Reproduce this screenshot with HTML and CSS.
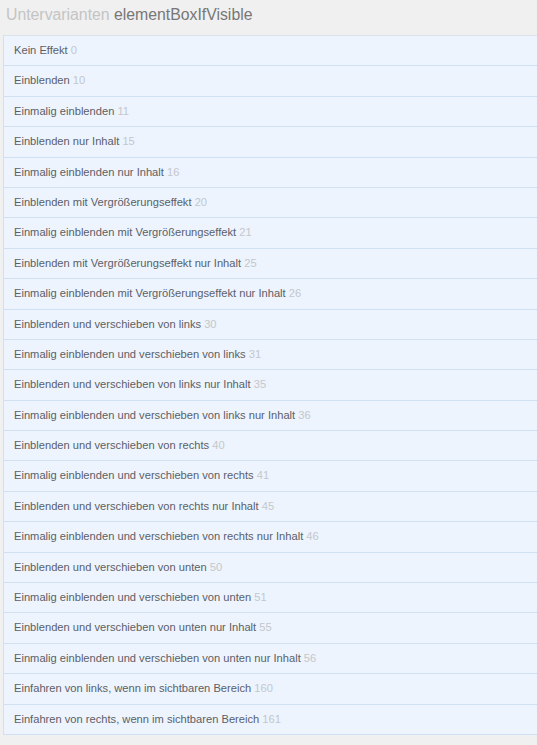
FILE: index.html
```html
<!DOCTYPE html>
<html>
<head>
  <title>Untervarianten</title>
  <link rel="stylesheet" href="styles.css">
</head>
<body>
  <div class="panel">
    <h2 class="panel-title"><span class="muted">Untervarianten</span> elementBoxIfVisible</h2>
    <ul class="variants">
      <li>Kein Effekt <span class="num">0</span></li>
      <li>Einblenden <span class="num">10</span></li>
      <li>Einmalig einblenden <span class="num">11</span></li>
      <li>Einblenden nur Inhalt <span class="num">15</span></li>
      <li>Einmalig einblenden nur Inhalt <span class="num">16</span></li>
      <li>Einblenden mit Vergrößerungseffekt <span class="num">20</span></li>
      <li>Einmalig einblenden mit Vergrößerungseffekt <span class="num">21</span></li>
      <li>Einblenden mit Vergrößerungseffekt nur Inhalt <span class="num">25</span></li>
      <li>Einmalig einblenden mit Vergrößerungseffekt nur Inhalt <span class="num">26</span></li>
      <li>Einblenden und verschieben von links <span class="num">30</span></li>
      <li>Einmalig einblenden und verschieben von links <span class="num">31</span></li>
      <li>Einblenden und verschieben von links nur Inhalt <span class="num">35</span></li>
      <li>Einmalig einblenden und verschieben von links nur Inhalt <span class="num">36</span></li>
      <li>Einblenden und verschieben von rechts <span class="num">40</span></li>
      <li>Einmalig einblenden und verschieben von rechts <span class="num">41</span></li>
      <li>Einblenden und verschieben von rechts nur Inhalt <span class="num">45</span></li>
      <li>Einmalig einblenden und verschieben von rechts nur Inhalt <span class="num">46</span></li>
      <li>Einblenden und verschieben von unten <span class="num">50</span></li>
      <li>Einmalig einblenden und verschieben von unten <span class="num">51</span></li>
      <li>Einblenden und verschieben von unten nur Inhalt <span class="num">55</span></li>
      <li>Einmalig einblenden und verschieben von unten nur Inhalt <span class="num">56</span></li>
      <li>Einfahren von links, wenn im sichtbaren Bereich <span class="num">160</span></li>
      <li>Einfahren von rechts, wenn im sichtbaren Bereich <span class="num">161</span></li>
    </ul>
  </div>
</body>
</html>
```
FILE: styles.css
```css
body {
  margin: 0;
  padding: 0;
  font-family: "Liberation Sans", Arial, sans-serif;
  background-color: #f0f0f0;
}
.panel {
  padding: 0 0 0 3px;
}
.panel-title {
  margin: 0;
  padding: 6px 0 0 3px;
  height: 35px;
  box-sizing: border-box;
  font-size: 15.8px;
  font-weight: normal;
  color: #777;
}
.panel-title .muted {
  color: #c4c4c4;
}
.variants {
  list-style: none;
  margin: 0;
  padding: 0;
  border-top: 1px solid #dde2e8;
  border-left: 1px solid #d2e1f2;
}
.variants li {
  height: 29.4px;
  line-height: 29.4px;
  padding-left: 10px;
  font-size: 11.15px;
  color: #5c5f66;
  background-color: #edf4fe;
  border-bottom: 1px solid #cfe0f3;
}
.variants .num {
  color: #c4c7cb;
}
```
